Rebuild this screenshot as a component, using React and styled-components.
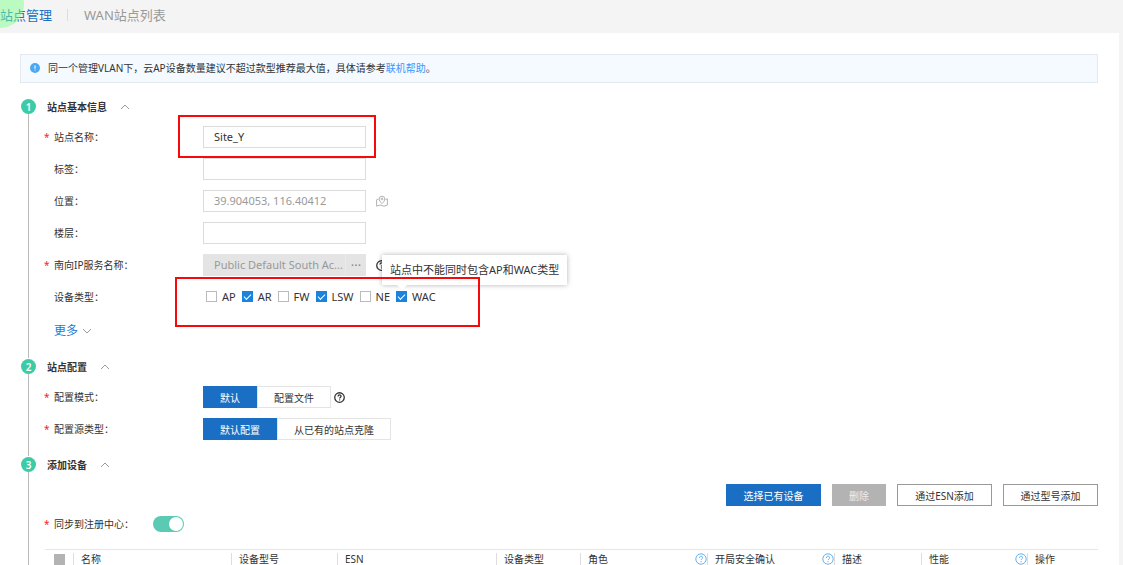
import React, { useState } from 'react';
import styled, { createGlobalStyle } from 'styled-components';

const GlobalStyle = createGlobalStyle`
  * {
    box-sizing: border-box;
  }
  body {
    margin: 0;
    background-color: #f4f4f4;
    color: #333333;
    font-family: "Noto Sans", "Noto Sans CJK SC", sans-serif;
    font-size: 10px;
    line-height: 16px;
  }
  button,
  input {
    font-family: inherit;
  }
`;

const deviceTypes = [
  { name: 'AP', checked: false },
  { name: 'AR', checked: true },
  { name: 'FW', checked: false },
  { name: 'LSW', checked: true },
  { name: 'NE', checked: false },
  { name: 'WAC', checked: true, tip: '站点中不能同时包含AP和WAC类型' },
];

const columns = [
  { title: '名称', width: 158 },
  { title: '设备型号', width: 106 },
  { title: 'ESN', width: 159 },
  { title: '设备类型', width: 84 },
  { title: '角色', width: 127, help: true },
  { title: '开局安全确认', width: 127, help: true },
  { title: '描述', width: 87 },
  { title: '性能', width: 106, help: true },
  { title: '操作', width: 71 },
];

const Chevron = ({ down }) => (
  <svg width="10" height="6" viewBox="0 0 10 6" fill="none" stroke="#999999" aria-hidden="true">
    <path d={down ? 'M1 1l4 4 4-4' : 'M1 5l4-4 4 4'} />
  </svg>
);

const HelpIcon = ({ color = '#333333', size = 11, thin }) => (
  <svg width={size} height={size} viewBox="0 0 12 12" fill="none" stroke={color} strokeWidth={thin ? 0.8 : 1.4} aria-hidden="true">
    <circle cx="6" cy="6" r="5.2" />
    <path d="M4.4 4.9c0-2.3 3.3-2.2 3.3-.2 0 1.2-1.6 1.2-1.6 2.4" />
    <path d="M6.1 8.1v1.1" />
  </svg>
);

const MapIcon = () => (
  <svg width="12" height="12" viewBox="0 0 12 12" fill="none" stroke="#aaaaaa" strokeWidth="0.9" aria-hidden="true">
    <path d="M2.600 4L.6 4.800v6.400L4 10l4 1.200 3.400-1.200V3.800L9.400 4.400" />
    <path d="M6 8.600C4 6.700 3.200 5.300 3.200 4a2.800 2.800 0 0 1 5.600 0c0 1.300-.8 2.700-2.800 4.600z" />
    <circle cx="6" cy="4" r="0.9" />
  </svg>
);

const InfoIcon = () => (
  <svg width="10" height="10" viewBox="0 0 10 10" aria-hidden="true">
    <circle cx="5" cy="5" r="5" fill="#4aa8f5" />
    <path d="M5 2.400v3.400M5 6.700v.9" stroke="#ffffff" strokeWidth="1.1" />
  </svg>
);

const Section = ({ number, title, children }) => (
  <Step>
    <Rail>
      <Badge>{number}</Badge>
      <RailLine />
    </Rail>
    <StepBody>
      <StepTitle>
        {title}
        <IconButton type="button" aria-label={title}>
          <Chevron />
        </IconButton>
      </StepTitle>
      {children}
    </StepBody>
  </Step>
);

const Switcher = ({ options, label }) => {
  const [active, setActive] = useState(0);

  return (
    <Segments role="group" aria-label={label}>
      {options.map((option, index) => (
        <Segment
          key={option}
          type="button"
          $active={active === index}
          aria-pressed={active === index}
          onClick={() => setActive(index)}
        >
          {option}
        </Segment>
      ))}
    </Segments>
  );
};

const App = () => (
  <>
    <GlobalStyle />
    <Page>
      <Header>
        <TouchMark />
        <HeaderLink href="#manage" $active>站点管理</HeaderLink>
        <HeaderLink href="#wan">WAN站点列表</HeaderLink>
      </Header>
      <Content>
        <Notice>
          <InfoIcon />
          <span>
            同一个管理VLAN下，云AP设备数量建议不超过款型推荐最大值，具体请参考<HelpLink href="#help">联机帮助</HelpLink>。
          </span>
        </Notice>

        <Section number={1} title="站点基本信息">
          <Fields>
            <Row>
              <Label as="label" htmlFor="name" $required>站点名称：</Label>
              <Control>
                <TextInput id="name" defaultValue="Site_Y" />
                <Highlight $top={11} $right={10} $bottom={10} $left={25} />
              </Control>
            </Row>
            <Row>
              <Label as="label" htmlFor="tag">标签：</Label>
              <Control><TextInput id="tag" /></Control>
            </Row>
            <Row>
              <Label as="label" htmlFor="place">位置：</Label>
              <Control>
                <TextInput id="place" placeholder="39.904053, 116.40412" />
              </Control>
              <IconButton type="button" aria-label="位置"><MapIcon /></IconButton>
            </Row>
            <Row>
              <Label as="label" htmlFor="floor">楼层：</Label>
              <Control><TextInput id="floor" /></Control>
            </Row>
            <Row>
              <Label as="label" htmlFor="service" $required>南向IP服务名称：</Label>
              <Control>
                <TextInput id="service" defaultValue="Public Default South Ac..." disabled />
                <MoreButton type="button" aria-label="选择" disabled>···</MoreButton>
              </Control>
              <IconButton type="button" aria-label="帮助"><HelpIcon /></IconButton>
            </Row>
            <Row>
              <Label>设备类型：</Label>
              <Checks>
                {deviceTypes.map(({ name, checked, tip }) => (
                  <CheckLabel key={name}>
                    <Checkbox type="checkbox" defaultChecked={checked} />
                    {name}
                    {tip && <Tooltip role="tooltip">{tip}</Tooltip>}
                  </CheckLabel>
                ))}
                <Highlight $top={12} $right={44} $bottom={22} $left={31} />
              </Checks>
            </Row>
            <MoreRow>
              <MoreLink href="#more">
                更多
                <Chevron down />
              </MoreLink>
            </MoreRow>
          </Fields>
        </Section>

        <Section number={2} title="站点配置">
          <Fields>
            <Row>
              <Label $required>配置模式：</Label>
              <Switcher label="配置模式" options={['默认', '配置文件']} />
              <HelpButton type="button" aria-label="帮助"><HelpIcon /></HelpButton>
            </Row>
            <Row>
              <Label $required>配置源类型：</Label>
              <Switcher label="配置源类型" options={['默认配置', '从已有的站点克隆']} />
            </Row>
          </Fields>
        </Section>

        <Section number={3} title="添加设备">
          <Toolbar>
            <Button type="button" $primary>选择已有设备</Button>
            <Button type="button" disabled>删除</Button>
            <Button type="button">通过ESN添加</Button>
            <Button type="button">通过型号添加</Button>
          </Toolbar>
          <SyncRow>
            <Label as="label" htmlFor="sync" $required $auto>同步到注册中心：</Label>
            <Toggle id="sync" type="checkbox" role="switch" defaultChecked />
          </SyncRow>
          <Table>
            <thead>
              <tr>
                <CheckCell>
                  <SelectAll type="checkbox" aria-label="全选" disabled />
                </CheckCell>
                {columns.map(({ title, width, help }) => (
                  <HeadCell key={title} $width={width}>
                    <CellInner>
                      {title}
                      {help && <HelpIcon color="#3f9fe8" size={12} thin />}
                    </CellInner>
                  </HeadCell>
                ))}
              </tr>
            </thead>
          </Table>
        </Section>
      </Content>
    </Page>
  </>
);

export default App;

const Page = styled.div`
  height: 100vh;
  overflow: hidden;
`;

const Header = styled.header`
  position: relative;
  display: flex;
  align-items: center;
  height: 33px;
  padding-bottom: 3px;
  overflow: hidden;
`;

const TouchMark = styled.span`
  position: absolute;
  top: -20px;
  left: -24px;
  width: 48px;
  height: 48px;
  border-radius: 50%;
  background-color: rgba(130, 255, 140, 0.5);
  pointer-events: none;
`;

const HeaderLink = styled.a`
  padding-right: 15px;
  font-size: 13px;
  text-decoration: none;
  color: ${({ $active }) => ($active ? '#1a6fc4' : '#999999')};
  & + & {
    padding-left: 16px;
    border-left: 1px solid #dddddd;
    line-height: 12px;
  }
`;

const Content = styled.main`
  min-height: 100%;
  margin-right: 4px;
  padding: 21px 21px 0 20px;
  background-color: #ffffff;
`;

const Notice = styled.div`
  display: flex;
  align-items: center;
  gap: 8px;
  height: 29px;
  margin-bottom: 15px;
  padding: 0 9px 1px;
  border: 1px solid #e3e9ee;
  background-color: #f4faff;
`;

const HelpLink = styled.a`
  color: #3d94ff;
  text-decoration: none;
`;

const Step = styled.section`
  display: flex;
  gap: 9px;
  padding-left: 1px;
`;

const Rail = styled.div`
  display: flex;
  flex-direction: column;
  align-items: center;
  width: 15px;
`;

const Badge = styled.span`
  display: flex;
  align-items: center;
  justify-content: center;
  width: 15px;
  height: 15px;
  margin-top: 1px;
  border-radius: 50%;
  background-color: #3dcba5;
  color: #ffffff;
  font-size: 10px;
  font-weight: 600;
`;

const RailLine = styled.span`
  flex: 1;
  width: 1px;
  background-color: #bbbbbb;
`;

const StepBody = styled.div`
  flex: 1;
  min-width: 0;
`;

const StepTitle = styled.h2`
  display: flex;
  align-items: center;
  gap: 13px;
  height: 18px;
  margin: 0;
  padding-left: 2px;
  font-size: 10px;
  font-weight: 600;
`;

const IconButton = styled.button`
  display: flex;
  align-items: center;
  padding: 0;
  border: none;
  background: none;
  cursor: pointer;
`;

const HelpButton = styled(IconButton)`
  margin-left: 3px;
`;

const Fields = styled.div`
  display: flex;
  flex-direction: column;
  gap: 10px;
  padding: 10px 0 16px;
`;

const Row = styled.div`
  display: flex;
  align-items: center;
  height: 22px;
`;

const MoreRow = styled(Row)`
  margin-top: 2px;
`;

const Label = styled.span`
  position: relative;
  width: ${({ $auto }) => ($auto ? 'auto' : '158px')};
  padding-left: 9px;
  ${({ $required }) => $required && `
    &::before {
      content: '*';
      position: absolute;
      left: -1px;
      color: #f5222d;
    }
  `}
`;

const Control = styled.div`
  position: relative;
  display: flex;
  width: 163px;
  margin-right: 10px;
`;

const TextInput = styled.input`
  width: 100%;
  height: 22px;
  padding: 0 10px 2px;
  border: 1px solid #dcdcdc;
  border-radius: 0;
  outline: none;
  font-size: 11px;
  color: #333333;
  &::placeholder {
    color: #999999;
  }
  &:disabled {
    border-color: #e4e4e4;
    background-color: #e4e4e4;
    color: #999999;
  }
`;

const MoreButton = styled.button`
  position: absolute;
  top: 0;
  right: 0;
  width: 21px;
  height: 22px;
  padding: 0;
  border: none;
  border-left: 1px solid #eaeaea;
  background-color: #e4e4e4;
  color: #888888;
  font-size: 13px;
`;

const Highlight = styled.span`
  position: absolute;
  top: -${({ $top }) => $top}px;
  right: -${({ $right }) => $right}px;
  bottom: -${({ $bottom }) => $bottom}px;
  left: -${({ $left }) => $left}px;
  border: 2px solid #f80808;
  pointer-events: none;
`;

const Checks = styled.div`
  position: relative;
  display: flex;
  gap: 6px;
  margin-left: 3px;
`;

const CheckLabel = styled.label`
  position: relative;
  display: flex;
  align-items: center;
  gap: 5px;
  font-size: 11px;
`;

const Checkbox = styled.input`
  appearance: none;
  width: 11px;
  height: 11px;
  margin: 0 0 1px;
  border: 1px solid #bbbbbb;
  background-color: #ffffff;
  &:checked {
    border-color: #1b83dc;
    background-color: #1b83dc;
  }
  &:checked::after {
    content: '';
    display: block;
    width: 6px;
    height: 3px;
    margin: 2px 1px;
    border: solid #ffffff;
    border-width: 0 0 1px 1px;
    transform: rotate(-45deg);
  }
`;

const Tooltip = styled.span`
  position: absolute;
  bottom: 20px;
  left: -14px;
  padding: 7px 8px;
  background-color: #ffffff;
  box-shadow: 0 0 5px rgba(0, 0, 0, 0.3);
  font-size: 11px;
  white-space: nowrap;
  &::after {
    content: '';
    position: absolute;
    top: 100%;
    left: 15px;
    border: 5px solid transparent;
    border-top-color: #ffffff;
  }
`;

const MoreLink = styled.a`
  display: flex;
  align-items: center;
  gap: 4px;
  padding-left: 9px;
  font-size: 12px;
  color: #1a7ad4;
  text-decoration: none;
`;

const Segments = styled.div`
  display: flex;
`;

const Segment = styled.button`
  height: 22px;
  padding: 0 16px;
  border: 1px solid ${({ $active }) => ($active ? '#1a6fc4' : '#e4e4e4')};
  background-color: ${({ $active }) => ($active ? '#1a6fc4' : '#ffffff')};
  color: ${({ $active }) => ($active ? '#ffffff' : '#333333')};
  font-size: 10px;
`;

const Toolbar = styled.div`
  display: flex;
  justify-content: flex-end;
  gap: 11px;
  padding-top: 10px;
`;

const Button = styled.button`
  min-width: 95px;
  height: 22px;
  padding: 0 16px;
  border: 1px solid ${({ $primary }) => ($primary ? '#1a6fc4' : '#999999')};
  background-color: ${({ $primary }) => ($primary ? '#1a6fc4' : '#ffffff')};
  color: ${({ $primary }) => ($primary ? '#ffffff' : '#333333')};
  font-size: 10px;
  &:disabled {
    min-width: 53px;
    border-color: #b3b3b3;
    background-color: #b3b3b3;
    color: #eeeeee;
  }
`;

const SyncRow = styled.div`
  display: flex;
  align-items: center;
  gap: 19px;
  height: 16px;
  margin: 10px 0 17px;
`;

const Toggle = styled.input`
  appearance: none;
  display: flex;
  width: 31px;
  height: 16px;
  margin: 0;
  padding: 1px;
  border-radius: 8px;
  background-color: #cccccc;
  &::after {
    content: '';
    width: 14px;
    height: 14px;
    border-radius: 50%;
    background-color: #ffffff;
  }
  &:checked {
    justify-content: flex-end;
    background-color: #5bcab2;
  }
`;

const Table = styled.table`
  width: 100%;
  border-collapse: collapse;
  table-layout: fixed;
  border-top: 1px solid #e6e6e6;
`;

const CheckCell = styled.th`
  width: 28px;
  padding: 4px 0 0 9px;
  text-align: left;
`;

const SelectAll = styled.input`
  appearance: none;
  display: block;
  width: 11px;
  height: 11px;
  margin: 0;
  background-color: #b3b3b3;
`;

const HeadCell = styled.th`
  width: ${({ $width }) => $width}px;
  padding: 3px 0 0;
  font-weight: normal;
`;

const CellInner = styled.div`
  display: flex;
  justify-content: space-between;
  padding-left: 7px;
  border-left: 1px solid #dddddd;
  line-height: 12px;
`;
